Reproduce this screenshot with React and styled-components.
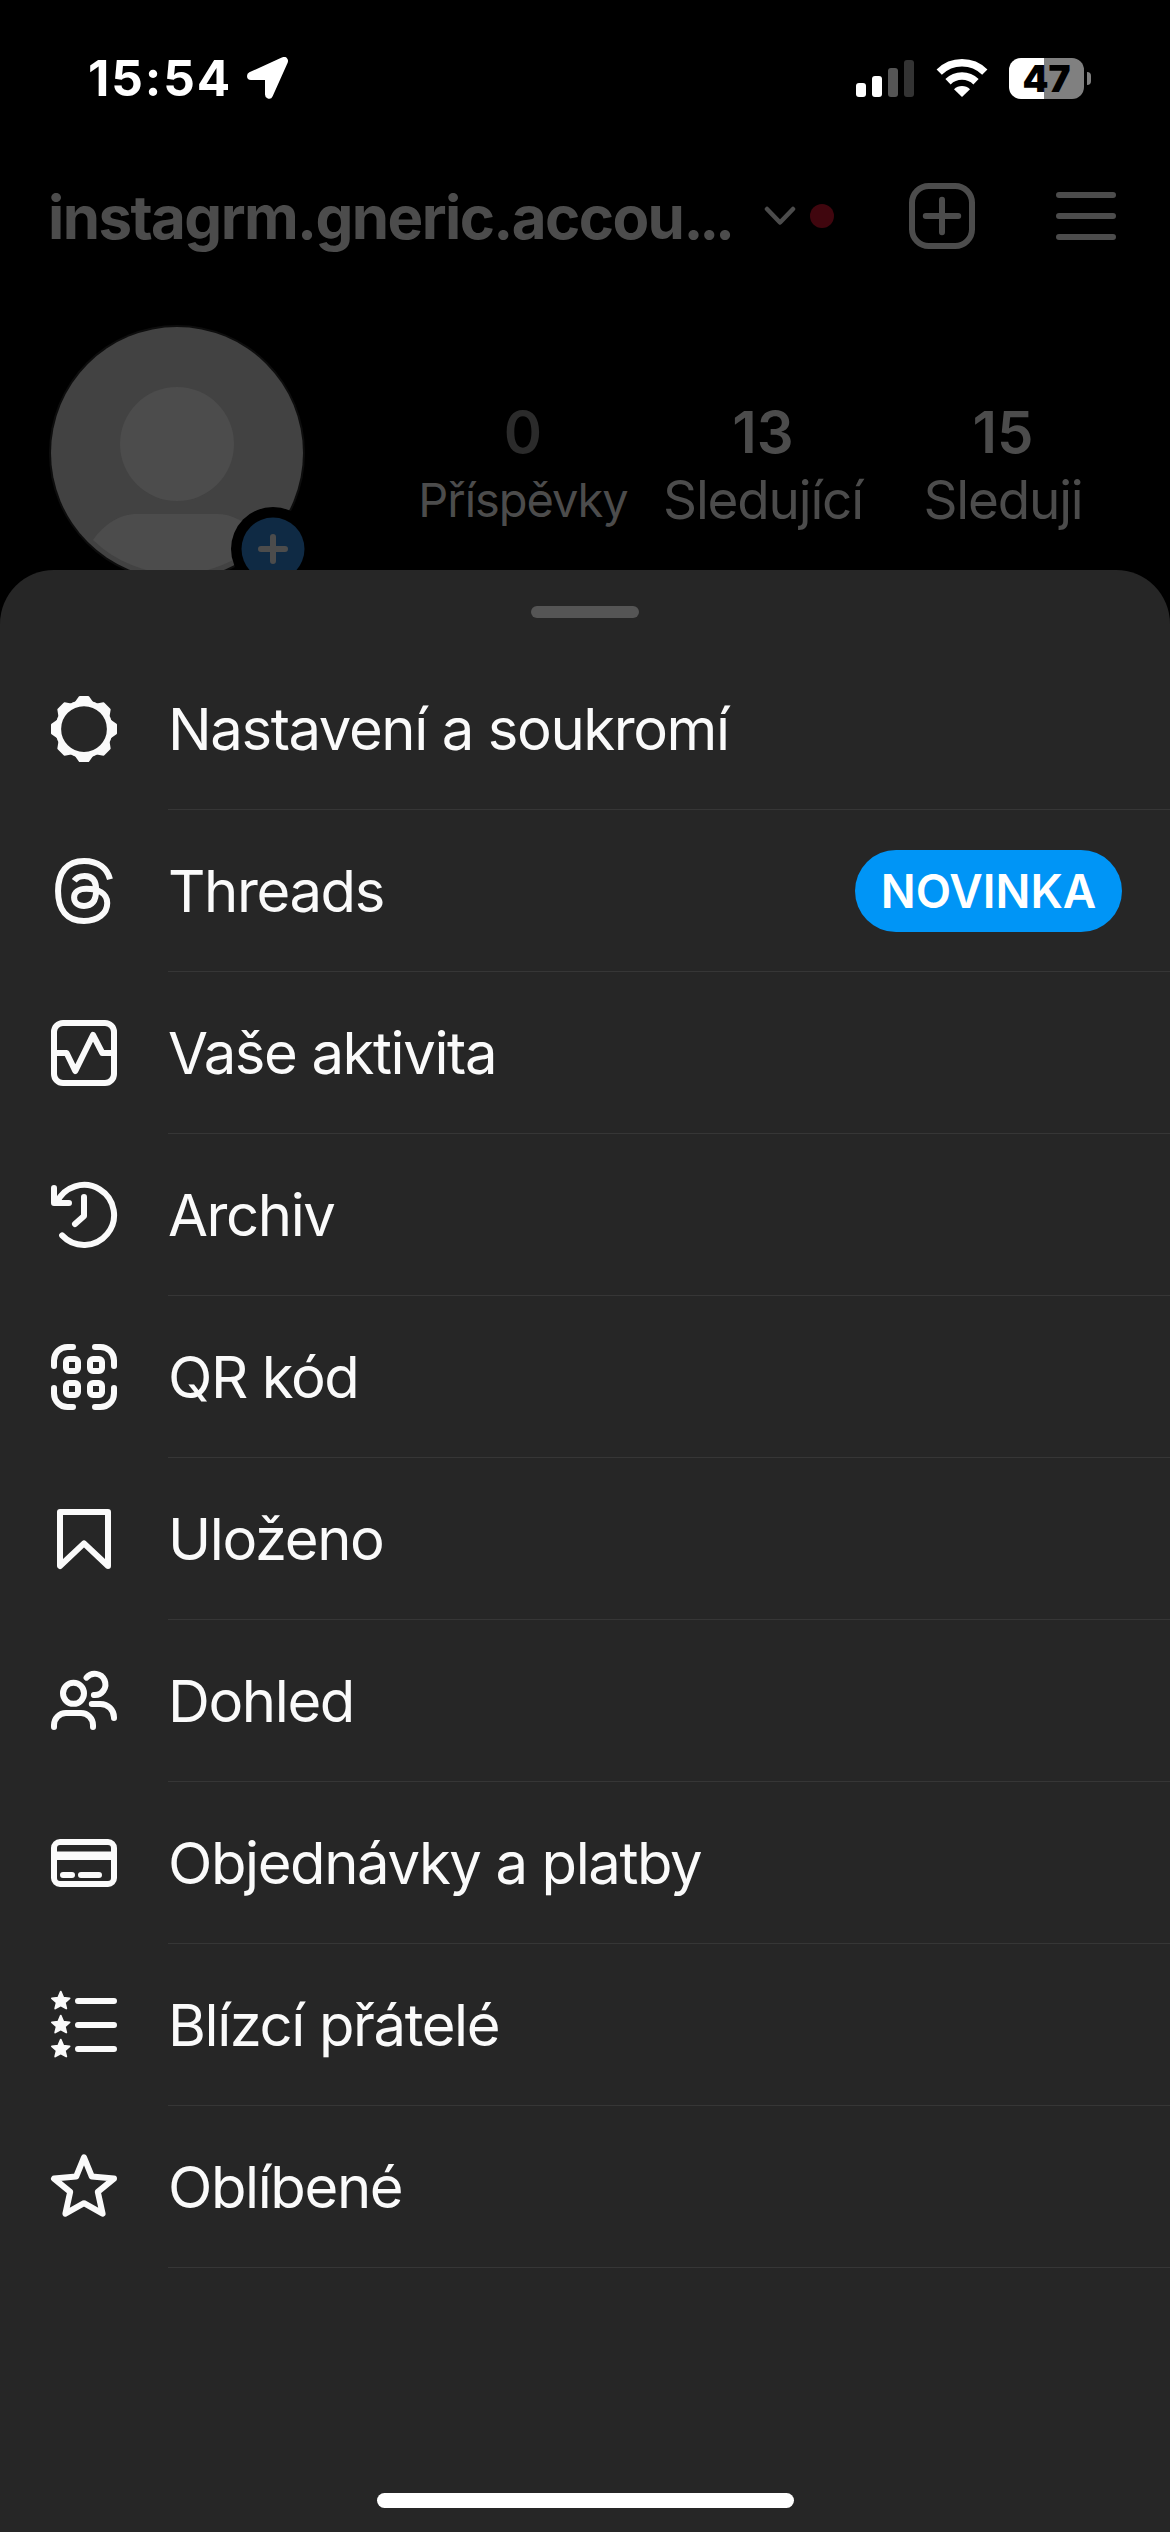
import React from "react";
import styled, { createGlobalStyle } from "styled-components";

const GlobalStyle = createGlobalStyle`
  * {
    box-sizing: border-box;
  }
  body {
    margin: 0;
    background: #000;
    font-family: Inter, "Liberation Sans", sans-serif;
  }
`;

const teeth = [0, 45, 90, 135, 180, 225, 270, 315];

const GearIcon = () => (
  <Icon>
    <circle cx="12" cy="12" r="8.6" strokeWidth="1.95" />
    {teeth.map((angle) => (
      <path
        key={angle}
        d="M9.3 3.2 L10.6 1.4 H13.4 L14.7 3.2 Z"
        fill="currentColor"
        strokeWidth="0.8"
        transform={`rotate(${angle} 12 12)`}
      />
    ))}
  </Icon>
);

const ThreadsIcon = () => (
  <Icon>
    <path
      strokeLinecap="butt"
      d="M20.65 8.1C19.8 4.6 16.9 2 12 2C6.3 2 3.35 5.8 3.35 12C3.35 18.2 6.3 22 12 22C16.6 22 19.75 19.5 19.75 16C19.75 12.8 16.7 11.25 12.8 11.25C10.2 11.25 8.7 12.5 8.7 14.2C8.7 15.9 10.1 17 12 17C14.8 17 16.05 15 16.05 11.7C16.05 8.6 14.8 7 12.2 7C10.6 7 9.5 7.5 8.75 8.6"
    />
  </Icon>
);

const ActivityIcon = () => (
  <Icon>
    <rect x="2" y="2" width="20" height="20" rx="3" />
    <path d="M2.5 12H6.2L9.1 18L15 6L18.1 12H21.5" />
  </Icon>
);

const ArchiveIcon = () => (
  <Icon>
    <path d="M4.7 18.8A10 10 0 1 0 2.85 8" />
    <path d="M2 3V8H7" />
    <path d="M12 6V12.3L9 15" />
  </Icon>
);

const QrIcon = () => (
  <Icon>
    <path d="M2 8.33V6.5A4.5 4.5 0 0 1 6.5 2H8.33" />
    <path d="M15.67 2H17.5A4.5 4.5 0 0 1 22 6.5V8.33" />
    <path d="M22 15.67V17.5A4.5 4.5 0 0 1 17.5 22H15.67" />
    <path d="M8.33 22H6.5A4.5 4.5 0 0 1 2 17.5V15.67" />
    <rect x="6" y="6" width="4" height="4" rx="1" />
    <rect x="14" y="6" width="4" height="4" rx="1" />
    <rect x="6" y="14" width="4" height="4" rx="1" />
    <rect x="14" y="14" width="4" height="4" rx="1" />
  </Icon>
);

const SavedIcon = () => (
  <Icon>
    <path d="M20 21L12 13.44L4 21V3H20Z" />
  </Icon>
);

const PeopleIcon = () => (
  <Icon>
    <circle cx="8.5" cy="9.45" r="3.5" />
    <path d="M2 20.67V20A4 4 0 0 1 6 16H11A4 4 0 0 1 15 20V20.67" />
    <path d="M12.85 4.2A3.55 3.55 0 1 1 15.3 10" />
    <path d="M14.6 13H17.5A4.5 4.5 0 0 1 22 17.5V17.7" />
  </Icon>
);

const CardIcon = () => (
  <Icon>
    <rect x="2" y="5" width="20" height="14" rx="2" />
    <path d="M2 9.55H22" strokeWidth="2.85" strokeLinecap="butt" />
    <path d="M5 16H8M11 16H17" />
  </Icon>
);

const ListIcon = () => (
  <Icon>
    {[0, 8, 16].map((y) => (
      <path
        key={y}
        d="M4.25 0.9L5.1 2.9L7.2 3.1L5.6 4.5L6.1 6.5L4.25 5.45L2.4 6.5L2.9 4.5L1.3 3.1L3.4 2.9Z"
        fill="currentColor"
        strokeWidth="0.6"
        transform={`translate(0 ${y})`}
      />
    ))}
    <path d="M10 4H22M10 12H22M10 20H22" />
  </Icon>
);

const StarIcon = () => (
  <Icon>
    <path d="M12 2.1L14.6 8.5L22 9.2L16.6 13.6L18.2 20.9L12 17.4L5.8 20.9L7.4 13.6L2 9.2L9.4 8.5Z" />
  </Icon>
);

const menu = [
  { label: "Nastavení a soukromí", icon: GearIcon },
  { label: "Threads", icon: ThreadsIcon, badge: "NOVINKA" },
  { label: "Vaše aktivita", icon: ActivityIcon },
  { label: "Archiv", icon: ArchiveIcon },
  { label: "QR kód", icon: QrIcon },
  { label: "Uloženo", icon: SavedIcon },
  { label: "Dohled", icon: PeopleIcon },
  { label: "Objednávky a platby", icon: CardIcon },
  { label: "Blízcí přátelé", icon: ListIcon },
  { label: "Oblíbené", icon: StarIcon },
];

const StatusBar = () => (
  <StyledStatusBar>
    <StyledTime>15:54</StyledTime>
    <svg width="42" height="42" viewBox="0 0 42 42">
      <path
        d="M4 19L37 4L22 37.5V19Z"
        fill="#fff"
        stroke="#fff"
        strokeWidth="8"
        strokeLinejoin="round"
      />
    </svg>
    <StyledSignal>
      <StyledBar $height={14} />
      <StyledBar $height={21} />
      <StyledBar $height={29} $color="#555" />
      <StyledBar $height={37} $color="#333" />
    </StyledSignal>
    <StyledWifi viewBox="0 0 52 38">
      <path d="M3.2 13.2A32.5 32.5 0 0 1 48.8 13.2" />
      <path d="M12 22.8A20 20 0 0 1 40 22.8" />
      <path d="M26 38L18 30.2A11.5 11.5 0 0 1 34 30.2Z" fill="#fff" stroke="none" />
    </StyledWifi>
    <StyledBattery>47</StyledBattery>
    <StyledBatteryCap />
  </StyledStatusBar>
);

const Header = () => (
  <StyledHeader>
    <StyledUsername>
      instagrm.gneric.accou<StyledDots>...</StyledDots>
    </StyledUsername>
    <StyledChevron viewBox="0 0 32 20">
      <path d="M3 3L16 16.5L29 3" />
    </StyledChevron>
    <StyledDot />
    <StyledNewPost viewBox="0 0 24 24">
      <rect x="2" y="2" width="20" height="20" rx="5.6" />
      <path d="M12 6.6V17.4M6.6 12H17.4" />
    </StyledNewPost>
    <StyledHamburger viewBox="0 0 20 16">
      <path d="M1 1H19M1 8H19M1 15H19" />
    </StyledHamburger>
  </StyledHeader>
);

const Avatar = () => (
  <StyledAvatar viewBox="0 0 270 270">
    <circle cx="129" cy="129" r="128" fill="#0d0d0d" />
    <circle cx="129" cy="129" r="126" fill="#424242" />
    <circle cx="129" cy="120" r="57" fill="#4c4c4c" />
    <path
      d="M45 216C56 200 72 190 89 190H169C186 190 202 200 213 216A121 121 0 0 1 45 216Z"
      fill="#4c4c4c"
    />
    <circle cx="225" cy="225" r="42" fill="#000" />
    <circle cx="225" cy="225" r="31.5" fill="#0f2a44" />
    <path d="M225 213V237M213 225H237" stroke="#4c4c4c" strokeWidth="6" strokeLinecap="round" />
  </StyledAvatar>
);

const App = () => {
  return (
    <StyledScreen>
      <GlobalStyle />
      <StatusBar />
      <Header />
      <StyledProfile>
        <Avatar />
        <StyledStat>
          <StyledCount $color="#2b2b2b">0</StyledCount>
          <StyledStatLabel $size={47}>Příspěvky</StyledStatLabel>
        </StyledStat>
        <StyledStat>
          <StyledCount>13</StyledCount>
          <StyledStatLabel>Sledující</StyledStatLabel>
        </StyledStat>
        <StyledStat>
          <StyledCount>15</StyledCount>
          <StyledStatLabel>Sleduji</StyledStatLabel>
        </StyledStat>
      </StyledProfile>
      <StyledSheet>
        <StyledHandle />
        <StyledMenu>
          {menu.map(({ label, icon: MenuIcon, badge }) => (
            <StyledItem key={label}>
              <MenuIcon />
              <StyledItemBody>
                <StyledLabel>{label}</StyledLabel>
                {badge && <StyledBadge>{badge}</StyledBadge>}
              </StyledItemBody>
            </StyledItem>
          ))}
        </StyledMenu>
        <StyledHomeIndicator />
      </StyledSheet>
    </StyledScreen>
  );
};

export default App;

const StyledScreen = styled.div`
  width: 1170px;
  height: 2532px;
  display: flex;
  flex-direction: column;
  overflow: hidden;
  background: #000;
`;

const StyledStatusBar = styled.div`
  height: 156px;
  display: flex;
  align-items: center;
  padding: 0 79px 0 88px;
  color: #fff;
`;

const StyledTime = styled.span`
  width: 159px;
  font-size: 49.5px;
  font-weight: 750;
  letter-spacing: 1.9px;
  white-space: nowrap;
`;

const StyledSignal = styled.div`
  height: 37px;
  display: flex;
  align-items: flex-end;
  gap: 6px;
  margin-left: auto;
`;

const StyledBar = styled.span`
  width: 10px;
  height: ${(props) => props.$height}px;
  border-radius: 3px;
  background: ${(props) => props.$color || "#fff"};
`;

const StyledWifi = styled.svg`
  width: 52px;
  height: 38px;
  margin-left: 22px;
  fill: none;
  stroke: #fff;
  stroke-width: 7.5;
`;

const StyledBattery = styled.div`
  width: 75px;
  height: 41px;
  margin-left: 21px;
  display: flex;
  align-items: center;
  justify-content: center;
  border-radius: 12px;
  background: linear-gradient(to right, #fff 35px, #808080 35px);
  color: #000;
  font-size: 37px;
  font-weight: 900;
`;

const StyledBatteryCap = styled.span`
  width: 4px;
  height: 13px;
  margin-left: 3px;
  border-radius: 0 4px 4px 0;
  background: #808080;
`;

const StyledHeader = styled.header`
  height: 120px;
  display: flex;
  align-items: center;
  padding: 0 54px 0 48px;
  color: #4c4c4c;
`;

const StyledUsername = styled.h1`
  width: 716px;
  margin: 0;
  padding-top: 2px;
  font-size: 60px;
  font-weight: 700;
  letter-spacing: -1.6px;
  white-space: nowrap;
`;

const StyledDots = styled.span`
  letter-spacing: -4.2px;
`;

const StyledChevron = styled.svg`
  width: 32px;
  height: 20px;
  fill: none;
  stroke: #4c4c4c;
  stroke-width: 4.5;
  stroke-linecap: round;
  stroke-linejoin: round;
`;

const StyledDot = styled.span`
  width: 24px;
  height: 24px;
  margin-left: 14px;
  border-radius: 50%;
  background: #40060e;
`;

const StyledNewPost = styled.svg`
  width: 72px;
  height: 72px;
  margin-left: 72px;
  fill: none;
  stroke: #4c4c4c;
  stroke-width: 2;
  stroke-linecap: round;
`;

const StyledHamburger = styled.svg`
  width: 60px;
  height: 48px;
  margin-left: auto;
  stroke: #4c4c4c;
  stroke-width: 2;
  stroke-linecap: round;
`;

const StyledProfile = styled.section`
  height: 294px;
  display: flex;
  padding: 48px 48px 0;
  overflow: hidden;
  color: #4c4c4c;
`;

const StyledAvatar = styled.svg`
  width: 270px;
  height: 270px;
  flex-shrink: 0;
  margin-right: 85px;
`;

const StyledStat = styled.div`
  width: 240px;
  flex-shrink: 0;
  padding-top: 74px;
  text-align: center;
`;

const StyledCount = styled.div`
  height: 68px;
  line-height: 68px;
  font-size: 58px;
  font-weight: 600;
  color: ${(props) => props.$color || "#4c4c4c"};
`;

const StyledStatLabel = styled.div`
  height: 68px;
  line-height: 68px;
  font-size: ${(props) => props.$size || 53}px;
  letter-spacing: -0.022em;
  white-space: nowrap;
`;

const StyledSheet = styled.main`
  flex: 1;
  display: flex;
  flex-direction: column;
  align-items: center;
  padding: 36px 0 24px;
  border-radius: 54px 54px 0 0;
  background: #262626;
`;

const StyledHandle = styled.div`
  width: 108px;
  height: 12px;
  border-radius: 6px;
  background: #555;
`;

const StyledMenu = styled.ul`
  width: 100%;
  margin: 30px 0 0;
  padding: 0;
  list-style: none;
`;

const StyledItem = styled.li`
  height: 162px;
  display: flex;
  align-items: center;
  gap: 48px;
  padding-left: 48px;
`;

const StyledItemBody = styled.div`
  height: 100%;
  flex: 1;
  display: flex;
  align-items: center;
  justify-content: space-between;
  padding-right: 48px;
  border-bottom: 1px solid #363636;
`;

const StyledLabel = styled.span`
  color: #fafafa;
  font-size: 58px;
  letter-spacing: -1.4px;
  white-space: nowrap;
`;

const StyledBadge = styled.span`
  width: 267px;
  height: 82px;
  display: flex;
  align-items: center;
  justify-content: center;
  border-radius: 41px;
  background: #0095f6;
  color: #fff;
  font-size: 46px;
  font-weight: 600;
`;

const StyledHomeIndicator = styled.div`
  width: 417px;
  height: 15px;
  margin-top: auto;
  border-radius: 8px;
  background: #fff;
`;

const Icon = styled.svg.attrs({ viewBox: "0 0 24 24" })`
  width: 72px;
  height: 72px;
  flex-shrink: 0;
  color: #fafafa;
  fill: none;
  stroke: currentColor;
  stroke-width: 2;
  stroke-linecap: round;
  stroke-linejoin: round;
`;
